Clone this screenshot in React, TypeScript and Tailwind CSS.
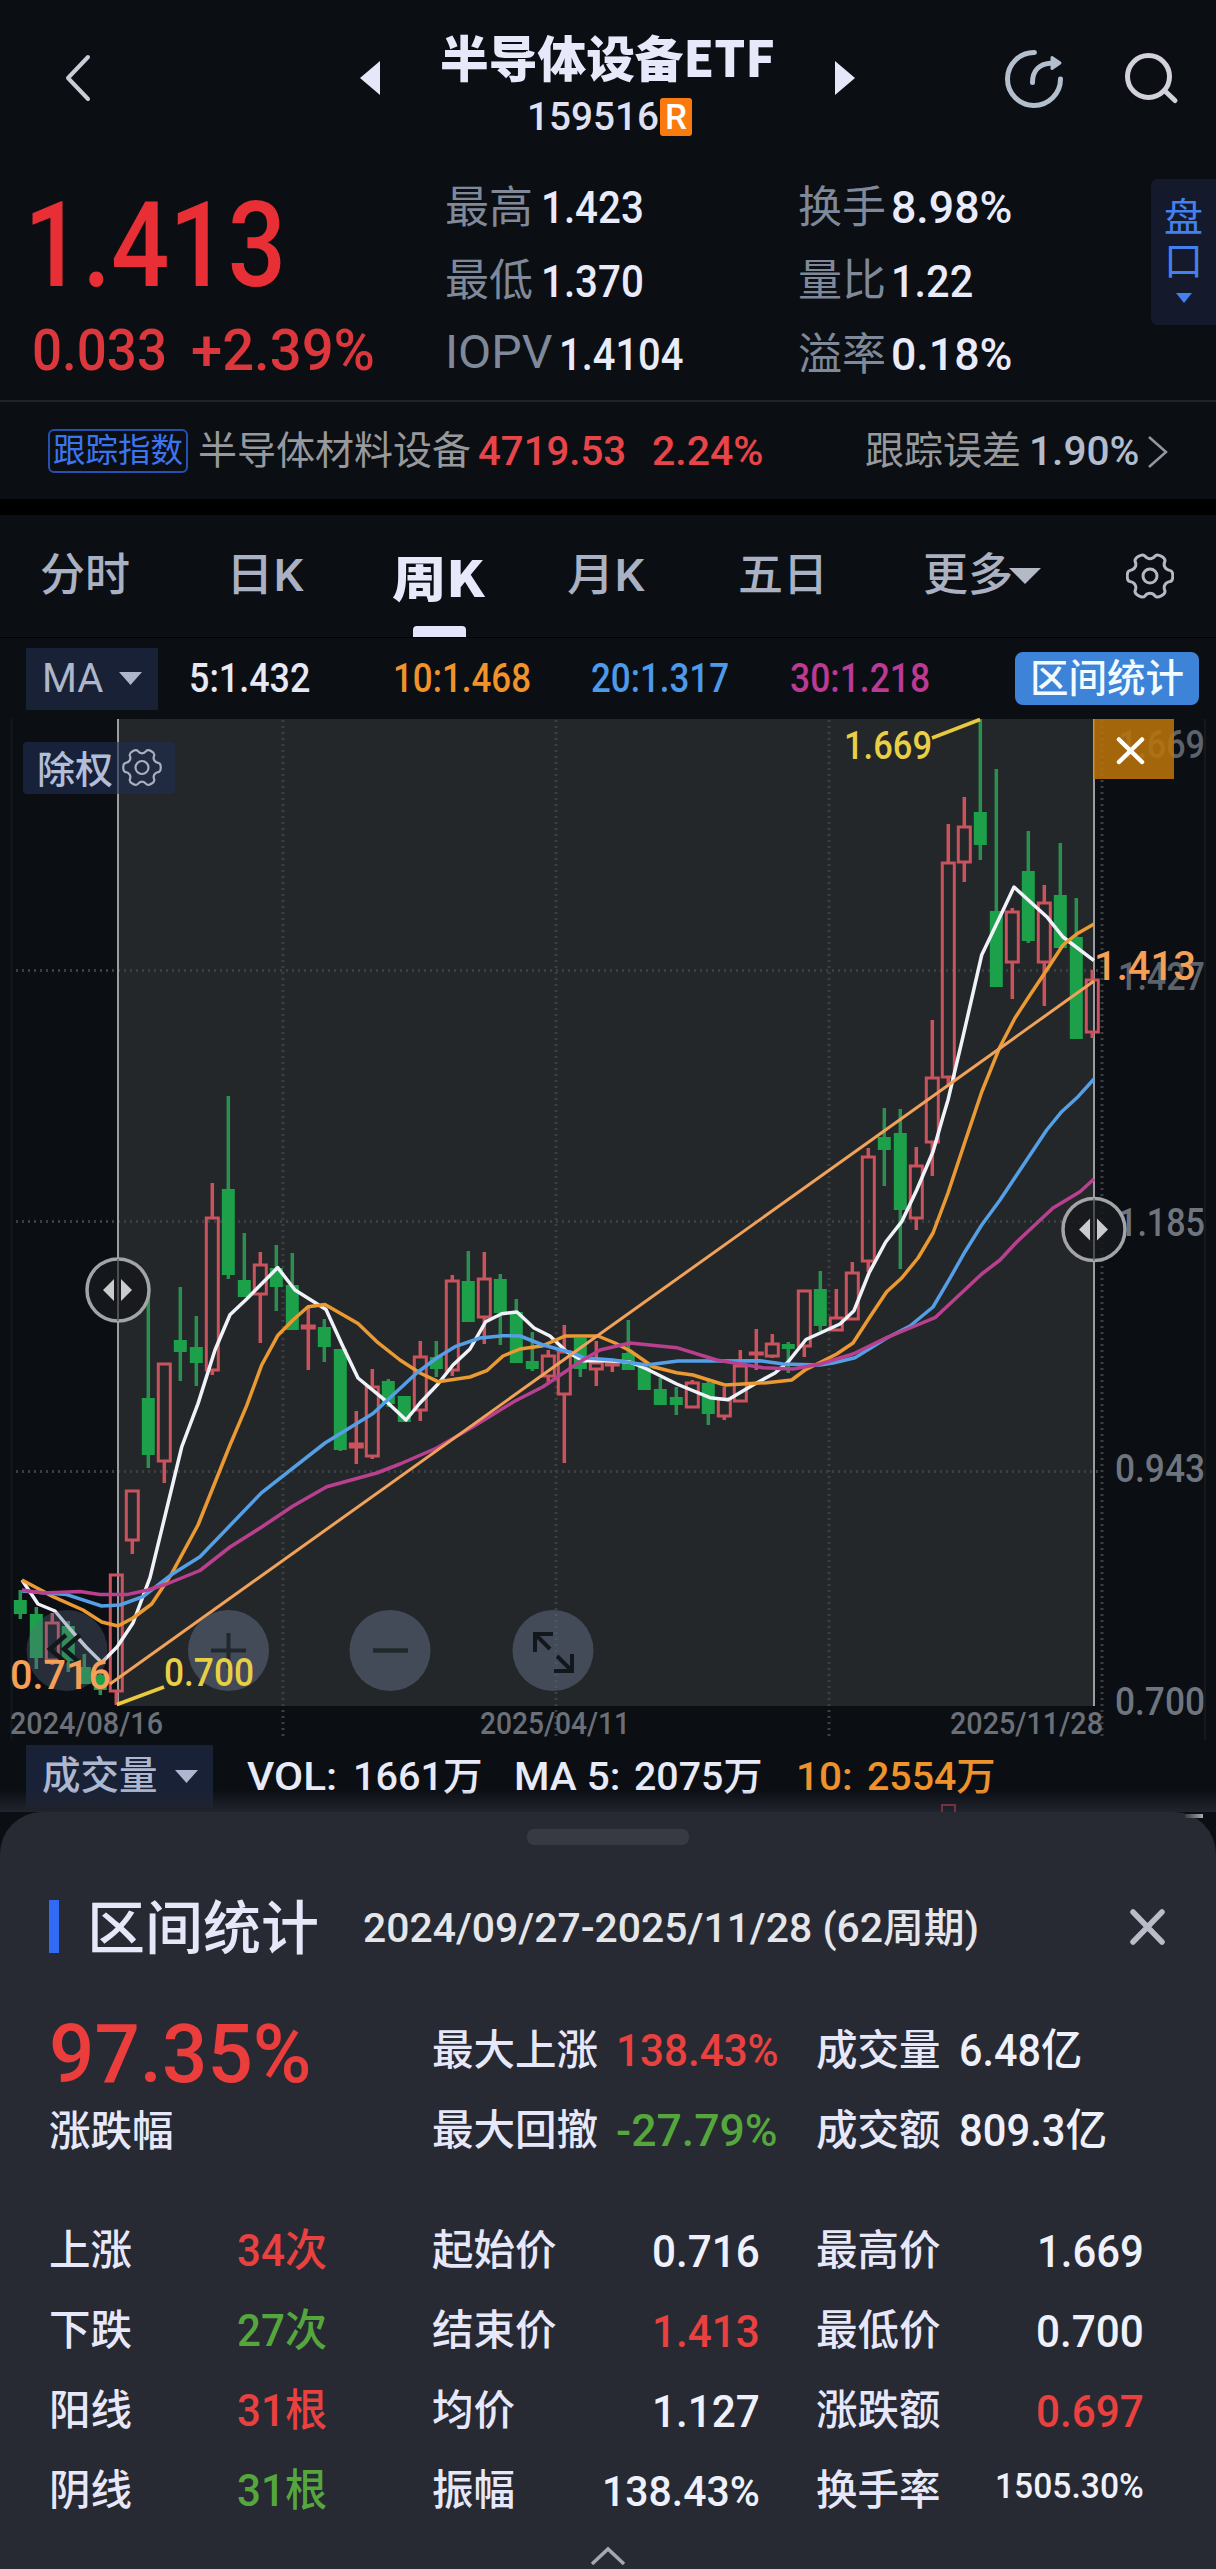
import { useLayoutEffect, useRef, useState, type ReactNode } from "react";

/** Text condensed or expanded horizontally so that it fills exactly `w` pixels. */
function Fit({ w, className = "", children }: { w: number; className?: string; children: ReactNode }) {
  const ref = useRef<HTMLSpanElement>(null);
  const [k, setK] = useState(1);
  useLayoutEffect(() => {
    if (ref.current && ref.current.offsetWidth) setK(w / ref.current.offsetWidth);
  }, [w]);
  return (
    <span className={"block shrink-0 leading-none " + className} style={{ width: w }}>
      <span ref={ref} className="inline-block origin-left whitespace-nowrap leading-none align-top" style={{ transform: `scaleX(${k})` }}>
        {children}
      </span>
    </span>
  );
}

function gearPath(cx: number, cy: number, r: number) {
  const pts: [number, number][] = [];
  const at = (deg: number, rad: number) => {
    const a = (deg * Math.PI) / 180;
    pts.push([cx + rad * Math.cos(a), cy + rad * Math.sin(a)]);
  };
  for (let t = 0; t < 6; t++) {
    at(t * 60 - 13, r * 1.04);
    at(t * 60 + 13, r * 1.04);
    at(t * 60 + 20, r * 0.78);
    at(t * 60 + 40, r * 0.78);
  }
  const mid = (a: [number, number], b: [number, number]) => `${((a[0] + b[0]) / 2).toFixed(2)} ${((a[1] + b[1]) / 2).toFixed(2)}`;
  let d = `M${mid(pts[pts.length - 1], pts[0])}`;
  pts.forEach((p, i) => {
    d += `Q${p[0].toFixed(2)} ${p[1].toFixed(2)} ${mid(p, pts[(i + 1) % pts.length])}`;
  });
  return d + "Z";
}

function Caret({ className }: { className: string }) {
  return (
    <svg viewBox="0 0 24 12" preserveAspectRatio="none" className={className} fill="currentColor">
      <path d="M0 0H24L12 12Z" />
    </svg>
  );
}

function Header() {
  return (
    <header className="grid h-[160px] grid-cols-[64px_296px_60px_375px_60px_149px_212px]">
      <span />
      <svg viewBox="0 0 30 50" className="mt-[53px] h-[50px] w-[30px]" fill="none" stroke="#c9cdd8" strokeWidth="4" strokeLinecap="round" strokeLinejoin="round">
        <path d="M24 4L4 25L24 46" />
      </svg>
      <svg viewBox="0 0 20 34" className="mt-[61px] h-[34px] w-[20px]" fill="#e6e8fa">
        <path d="M20 0V34L0 17Z" />
      </svg>
      <div className="flex flex-col pl-[20px]">
        <Fit w={335} className="mt-[31px] text-[49px] font-black text-[#e8e8fb] font-['Noto_Sans_CJK_SC',sans-serif]">半导体设备ETF</Fit>
        <div className="ml-[87px] mt-[18px] flex h-[38px] items-center">
          <Fit w={132} className="text-[39px] text-[#dfe1f2]">159516</Fit>
          <span className="ml-[1px] flex h-[38px] w-[32px] items-center justify-center rounded-[3px] bg-[#fb7a0d] text-[35px] leading-none text-white">R</span>
        </div>
      </div>
      <svg viewBox="0 0 20 34" className="ml-[40px] mt-[61px] h-[34px] w-[20px]" fill="#e6e8fa">
        <path d="M0 0V34L20 17Z" />
      </svg>
      <span />
      <svg viewBox="0 0 212 80" className="mt-[40px] h-[80px] w-[212px]" fill="none" strokeLinecap="round">
        <g stroke="#b3bfcc" strokeWidth="5">
          <path d="M30.500 12.500A26.500 26.500 0 1 0 56.500 39" />
          <path d="M28.500 42.500C28.500 30 36 24 46 23.200" />
          <path d="M48 17.500L56 23L48 28.500Z" fill="#b3bfcc" strokeWidth="3" strokeLinejoin="round" />
        </g>
        <g stroke="#d3d2dc" strokeWidth="5">
          <circle cx="144.500" cy="36.500" r="21" />
          <path d="M161 51L171 60.500" strokeWidth="5" />
        </g>
      </svg>
    </header>
  );
}

function Quote({ label, lw, value, vw }: { label: ReactNode; lw: string; value: string; vw: number }) {
  return (
    <div className="flex h-[73.500px] items-center">
      <span className={"shrink-0 text-[44px] font-normal leading-none text-[#7f8999] " + lw}>{label}</span>
      <Fit w={vw} className="text-[45px] text-[#e9ebfa]">{value}</Fit>
    </div>
  );
}

function Quotes() {
  return (
    <section className="grid h-[240px] grid-cols-[445px_353px_353px_65px]">
      <div className="pl-[24px] text-[#e82f36]">
        <Fit w={262} className="mt-[27px] text-[118px] font-medium">1.413</Fit>
        <div className="mt-[16px] flex text-[58px] text-[#dc373d]">
          <Fit w={135} className="ml-[8px]">0.033</Fit>
          <Fit w={184} className="ml-[24px]">+2.39%</Fit>
        </div>
      </div>
      <div className="pt-[11px]">
        <Quote label="最高" lw="w-[96px]" value="1.423" vw={103} />
        <Quote label="最低" lw="w-[96px]" value="1.370" vw={103} />
        <Quote label={<Fit w={107} className="-mt-[5px] text-[46px]">IOPV</Fit>} lw="w-[114px]" value="1.4104" vw={124} />
      </div>
      <div className="pt-[11px]">
        <Quote label="换手" lw="w-[93px]" value="8.98%" vw={121} />
        <Quote label="量比" lw="w-[93px]" value="1.22" vw={82} />
        <Quote label="溢率" lw="w-[93px]" value="0.18%" vw={121} />
      </div>
      <div className="mt-[19px] flex h-[146px] flex-col items-center rounded-l-[7px] bg-[#141a2b] text-[39px] leading-none text-[#4281ee] font-normal">
        <span className="mt-[20px]">盘</span>
        <span className="mt-[5px]">口</span>
        <Caret className="mt-[11px] h-[10px] w-[16px]" />
      </div>
    </section>
  );
}

function IndexRow() {
  return (
    <section className="grid h-[99px] grid-cols-[48px_150px_280px_174px_213px_164px_1fr] items-center border-t-2 border-[#1f242a] pt-[2px] text-[39px] font-normal leading-none text-[#97999d]">
      <span />
      <span className="-mt-[1px] flex h-[44px] w-[140px] items-center justify-center rounded-[6px] border-2 border-[#2450b4] text-[32.500px] leading-none text-[#3d74f0]">跟踪指数</span>
      <span>半导体材料设备</span>
      <Fit w={148} className="text-[41px] font-medium text-[#e8454a]">4719.53</Fit>
      <Fit w={112} className="text-[41px] font-medium text-[#e8454a]">2.24%</Fit>
      <span>跟踪误差</span>
      <div className="flex items-center">
        <Fit w={111} className="text-[41px] font-medium text-[#b1bccf]">1.90%</Fit>
        <svg viewBox="0 0 22 34" className="ml-[7px] h-[34px] w-[22px]" fill="none" stroke="#9297a0" strokeWidth="2.500">
          <path d="M2 2L19 17L2 32" />
        </svg>
      </div>
    </section>
  );
}

function Tabs() {
  return (
    <nav className="grid h-[123px] grid-cols-[40px_186px_166px_175px_171px_185px_203px_1fr] items-start border-b border-black pt-[38px] text-[45px] leading-[46px] text-[#a9b1c3]">
      <span />
      <span>分时</span>
      <Fit w={77} className="leading-[46px]">日K</Fit>
      <span className="relative font-black text-[#e8e8fb] font-['Noto_Sans_CJK_SC',sans-serif]">
        <Fit w={93} className="-mt-[2px] text-[49px]">周K</Fit>
        <span className="absolute left-[21px] top-[73px] h-[11px] w-[53px] rounded-t-[4px] bg-[#e4e4fa]" />
      </span>
      <Fit w={77}>月K</Fit>
      <span>五日</span>
      <span className="flex items-center">
        更多
        <Caret className="-ml-[4px] h-[16px] w-[32px] text-[#b4b9c6]" />
      </span>
      <svg viewBox="0 0 48 48" className="-mt-[1px] h-[48px] w-[48px]" fill="none" stroke="#b4b9c4" strokeWidth="3">
        <path d={gearPath(24, 24, 22.500)} />
        <circle cx="24" cy="24" r="7" />
      </svg>
    </nav>
  );
}

function MaRow() {
  return (
    <section className="grid h-[80px] grid-cols-[26px_163px_204px_198px_199px_225px_1fr] items-center pt-[1px] text-[40px]">
      <span />
      <span className="flex h-[62px] w-[132px] items-center bg-[#182136] pl-[16px] text-[#aeb7c9]">
        <Fit w={61} className="font-normal">MA</Fit>
        <Caret className="ml-[16px] h-[13px] w-[23px]" />
      </span>
      <Fit w={121} className="text-[#e6e8f4]">5:1.432</Fit>
      <Fit w={138} className="text-[#f0932b]">10:1.468</Fit>
      <Fit w={138} className="text-[#4d9ae8]">20:1.317</Fit>
      <Fit w={140} className="text-[#bb3a93]">30:1.218</Fit>
      <span className="flex h-[53px] w-[184px] items-center justify-center rounded-[8px] bg-[#3d84d8] pt-[2px] text-[38.500px] font-medium leading-none text-[#f2fbff]">区间统计</span>
    </section>
  );
}

// Weekly candles: [body top, body bottom, high, low, rising]
const candles: [number, number, number, number, 0 | 1][] = [
  [1600, 1614, 1590, 1619, 0], [1614, 1658, 1607, 1669, 0], [1622, 1661, 1613, 1665, 1], [1626, 1661, 1621, 1672, 0],
  [1667, 1684, 1654, 1684, 0], [1675, 1690, 1672, 1695, 0], [1574, 1692, 1574, 1705, 1], [1490, 1541, 1490, 1554, 1],
  [1398, 1455, 1296, 1468, 0], [1363, 1462, 1363, 1483, 1], [1340, 1352, 1287, 1381, 0], [1347, 1363, 1316, 1386, 0],
  [1217, 1371, 1183, 1375, 1], [1189, 1275, 1096, 1279, 0], [1280, 1297, 1233, 1297, 0], [1264, 1295, 1252, 1343, 1],
  [1268, 1287, 1245, 1311, 0], [1285, 1330, 1253, 1330, 0], [1325, 1329, 1308, 1370, 1], [1327, 1347, 1319, 1362, 0],
  [1349, 1450, 1349, 1451, 0], [1443, 1448, 1411, 1464, 1], [1386, 1457, 1369, 1459, 1], [1381, 1404, 1379, 1407, 0],
  [1396, 1422, 1396, 1422, 0], [1356, 1411, 1341, 1421, 1], [1357, 1369, 1341, 1377, 0], [1280, 1371, 1275, 1376, 1],
  [1281, 1322, 1251, 1322, 0], [1278, 1318, 1252, 1344, 1], [1279, 1313, 1274, 1345, 0], [1312, 1363, 1299, 1363, 0],
  [1361, 1369, 1332, 1371, 0], [1355, 1377, 1350, 1382, 1], [1351, 1395, 1325, 1463, 1], [1338, 1369, 1338, 1377, 0],
  [1362, 1370, 1341, 1386, 1], [1362, 1366, 1360, 1372, 1], [1353, 1370, 1320, 1370, 0], [1367, 1390, 1367, 1390, 0],
  [1389, 1405, 1378, 1405, 0], [1397, 1405, 1387, 1415, 0], [1382, 1408, 1380, 1408, 1], [1383, 1414, 1380, 1425, 0],
  [1398, 1417, 1387, 1420, 1], [1365, 1402, 1350, 1402, 1], [1352, 1353, 1329, 1370, 1], [1343, 1357, 1334, 1358, 1],
  [1344, 1349, 1342, 1373, 0], [1290, 1347, 1290, 1357, 1], [1289, 1326, 1271, 1331, 0], [1317, 1331, 1289, 1331, 1],
  [1272, 1320, 1262, 1320, 1], [1156, 1262, 1148, 1272, 1], [1137, 1150, 1108, 1186, 0], [1133, 1210, 1109, 1269, 0],
  [1165, 1219, 1147, 1230, 1], [1077, 1143, 1020, 1176, 1], [862, 1078, 824, 1086, 1], [826, 863, 797, 882, 1],
  [812, 845, 719, 860, 0], [911, 987, 769, 987, 0], [911, 963, 908, 999, 1], [871, 941, 831, 943, 0],
  [902, 963, 885, 1006, 1], [895, 948, 843, 948, 0], [937, 1039, 898, 1039, 0], [979, 1033, 970, 1038, 1],
];

const ma5 = "22,1580 38,1604 55,1611 70,1629 86,1647 101.7,1662.6 117,1647 133,1623 150,1577.6 165,1516 181.7,1447 198,1403.6 215,1350 230,1314.7 246.7,1299 277.7,1267.6 295,1290 326,1309.5 342.7,1346 358,1378 386.7,1401.7 406,1420 420,1403 438,1384 453,1365 470,1349 485.7,1321.7 501.7,1313.7 517,1312 534,1328 550,1336 566.7,1351.7 583,1360.7 606.7,1360.7 630,1362 646.7,1369 676.7,1384 710,1397.7 728,1399.7 753,1385 775,1373 788,1362 806,1339.5 840,1324 854,1310.7 869,1273 885.7,1242 901.7,1221.7 916.7,1190 933,1151.7 943,1116.7 948,1100 963,1036.7 981.7,955 1000,916.7 1014,887 1046.7,916.7 1063,937 1094,960.7";
const ma10 = "22,1580 53,1596.6 83,1610 101.7,1622 118,1626 133,1618 151.7,1604 171.7,1573.7 198,1525 213,1487.5 230,1445 246.7,1405.6 261.7,1365 277.7,1335.6 293,1320 308,1306.8 325,1304.4 358,1323.4 376.7,1341.6 400,1360 420,1373 438,1381.7 470,1377 486.7,1370.7 503,1356 520,1349 543,1345.7 565,1336 598,1336 615,1343 630,1350.7 653,1366.7 676.7,1372.7 693,1375 725,1385 766.7,1382.7 791.7,1380 805,1370 820,1362.5 836.7,1354 853,1343 870,1316.7 886.7,1291.7 901.7,1278 918,1258 933,1233 948,1193 965,1141.7 981.7,1092 1000,1046.7 1015,1018 1030,995 1046.7,970 1063,945 1076.7,934 1094,924";
const ma20 = "22,1591 66.7,1594.6 101.7,1606 120,1605 143,1596.6 171.7,1574.5 200,1556.7 261.7,1492.6 325,1443 373,1413.5 416.7,1373 436.7,1358 455,1346.7 480,1338 503,1335.7 520,1336 543,1345 573,1353 583,1357.7 613,1360 646.7,1365 678,1361 760,1360.7 783,1364 820,1365 833,1363 855,1357.7 886.7,1338 910,1326 933,1307 948,1281.7 965,1251.7 981.7,1225 1000,1200 1046.7,1130 1061.7,1111.7 1078,1096.7 1094,1079";
const ma30 = "22,1590 43,1593 80,1591.5 100,1594.6 126.7,1594.6 148,1590 166.7,1584 200,1570.5 230,1547 261.7,1527 293,1506 326.7,1486.7 376.7,1473 400,1464 436.7,1448 473,1426.7 515,1401 543,1386.7 580,1361.7 600,1350 630,1343 676.7,1347.7 716.7,1360 763,1367.7 793,1369 820,1364 853,1354 886.7,1337.7 910,1328 935,1317.7 981.7,1274 1000,1260 1016.7,1242 1053,1208 1080,1191.7 1094,1179";

function Label({ x, y, w, size, fill, children }: { x: number; y: number; w: number; size: number; fill: string; children: string }) {
  return (
    <text x={x} y={y} textLength={w} lengthAdjust="spacingAndGlyphs" fontSize={size} fill={fill}>
      {children}
    </text>
  );
}

function Handle({ x, y }: { x: number; y: number }) {
  return (
    <g>
      <circle cx={x} cy={y} r="31" fill="#16191c" fillOpacity="0.85" stroke="#a2a4a6" strokeWidth="3.500" />
      <path d={`M${x} ${y - 31}V${y + 31}`} stroke="#5a5c5e" strokeWidth="1.500" />
      <path d={`M${x - 15} ${y}L${x - 4} ${y - 11}V${y + 11}ZM${x + 14} ${y}L${x + 3} ${y - 11}V${y + 11}Z`} fill="#c9cbcd" />
    </g>
  );
}

function Chart() {
  return (
    <svg viewBox="0 718 1216 1022" className="block h-[1022px] w-[1216px] overflow-visible">
      <rect x="118" y="719" width="976" height="987" fill="#242729" />
      <path d="M11.500 719V1740M1205 719V1740" stroke="#15191f" strokeWidth="2" />
      <g stroke="#3b3f43" strokeWidth="3">
        <path d="M16 970.500H1100M16 1221.500H1100M16 1471.500H1100" strokeDasharray="2 4" />
        <path d="M283 720V1736M556 720V1736M829 720V1736M1102 720V1736" strokeDasharray="2 4" />
      </g>
      <path d="M118 719V1706M1094 719V1706" stroke="#9b9d9e" strokeWidth="2" />
      {candles.map(([top, bottom, high, low, up], i) => {
        const x = 20.300 + i * 16;
        return up ? (
          <g key={i} stroke="#cb535e" fill="none">
            <path d={`M${x} ${high}V${top}M${x} ${bottom}V${low}`} strokeWidth="3.500" />
            <rect x={x - 6} y={top + 1} width="12" height={Math.max(bottom - top - 2, 1)} strokeWidth="3" />
          </g>
        ) : (
          <g key={i}>
            <path d={`M${x} ${high}V${low}`} stroke="#2b8f50" strokeWidth="3.500" />
            <rect x={x - 6.500} y={top} width="13" height={bottom - top} fill="#1ca04a" />
          </g>
        );
      })}
      <g fill="none" strokeWidth="3.500" strokeLinejoin="round">
        <polyline points={ma5} stroke="#f0f2fa" />
        <polyline points={ma10} stroke="#eb9a33" />
        <polyline points={ma20} stroke="#559fe6" />
        <polyline points={ma30} stroke="#b9408f" />
        <path d="M110 1684L1094 981" stroke="#f0a25a" strokeWidth="3" />
      </g>
      <g stroke="#e9c93f" strokeWidth="3.500" fill="none">
        <path d="M932 738L980 719.500" />
        <path d="M117 1704.500L164 1687" />
      </g>

      <g fill="#5c6980">
        <circle cx="67" cy="1650.500" r="40.500" fillOpacity="0.35" />
        <circle cx="228.500" cy="1650.500" r="40.500" fillOpacity="0.55" />
        <circle cx="390" cy="1650.500" r="40.500" fillOpacity="0.55" />
        <circle cx="553" cy="1650.500" r="40.500" fillOpacity="0.55" />
      </g>
      <g fill="none" stroke="#12171b" strokeWidth="4">
        <path d="M66 1635L50 1649L66 1663M80 1635L64 1649L80 1663" strokeWidth="4.500" />
        <path d="M211 1650.500H246M228.500 1633V1668" stroke="#20282c" />
        <path d="M373 1650.500H408" stroke="#20282c" strokeWidth="4.500" />
        <path d="M535 1652V1634H553M535 1634L550 1649M572 1654V1671H554M572 1671L557 1656" />
      </g>

      <g fontFamily="Roboto, sans-serif" fontWeight="500">
        <Label x={1118} y={758} w={87} size={38} fill="#5d636c">1.669</Label>
        <Label x={1118} y={990} w={87} size={38} fill="#5d636c">1.427</Label>
        <Label x={1118} y={1235.500} w={87} size={38} fill="#6f757e">1.185</Label>
        <Label x={1115} y={1481.500} w={90} size={38} fill="#6f757e">0.943</Label>
        <Label x={1115} y={1715} w={90} size={38} fill="#6f757e">0.700</Label>
        <Label x={844} y={759} w={88} size={38} fill="#e9cf45">1.669</Label>
        <Label x={164} y={1686} w={90} size={38} fill="#e9cf45">0.700</Label>
        <Label x={10} y={1689} w={101} size={40} fill="#f5a056">0.716</Label>
        <Label x={1094} y={980} w={102} size={40} fill="#f5a056">1.413</Label>
        <Label x={10} y={1734} w={153} size={32} fill="#6b7078">2024/08/16</Label>
        <Label x={480} y={1734} w={150} size={32} fill="#6b7078">2025/04/11</Label>
        <Label x={950} y={1734} w={153} size={32} fill="#6b7078">2025/11/28</Label>
      </g>

      <rect x="23" y="742" width="152" height="52" rx="4" fill="#1f2f52" fillOpacity="0.62" />
      <text x="37" y="783" fontSize="38" fontWeight="500" fill="#b3bdd6" fontFamily="'Noto Sans CJK SC', sans-serif">除权</text>
      <g fill="none" stroke="#a9afbc" strokeWidth="2.200">
        <path d={gearPath(142, 767.500, 18.500)} />
        <circle cx="142" cy="767.500" r="6.500" />
      </g>

      <rect x="1094" y="719" width="80" height="60" fill="#b8730a" fillOpacity="0.88" />
      <path d="M1119 739.500L1142 762M1142 739.500L1119 762" stroke="#fff" strokeWidth="4.500" strokeLinecap="round" />

      <Handle x={118} y={1290} />
      <Handle x={1094} y={1229.500} />
    </svg>
  );
}

function VolumeRow() {
  return (
    <section className="relative grid h-[72px] grid-cols-[26px_221px_106px_161px_120px_162px_71px_1fr] items-start pt-[5px] text-[39px] text-[#e8eaf8]">
      <span />
      <span className="flex h-[63px] w-[187px] items-center bg-[#182136] pl-[16px] text-[38.500px] leading-none text-[#aeb7d0]">
        成交量
        <Caret className="ml-[17px] h-[13px] w-[23px]" />
      </span>
      <Fit w={90} className="pt-[13px]">VOL:</Fit>
      <Fit w={130} className="pt-[13px]">1661万</Fit>
      <Fit w={106} className="pt-[13px]">MA 5:</Fit>
      <Fit w={129} className="pt-[13px]">2075万</Fit>
      <Fit w={57} className="pt-[13px] text-[#ee922c]">10:</Fit>
      <Fit w={129} className="pt-[13px] text-[#ee922c]">2554万</Fit>
      <div className="absolute inset-x-0 bottom-0 h-[22px] bg-gradient-to-b from-[#1b1d26]/0 to-[#22242d]" />
      <div className="absolute bottom-0 left-[941px] h-[8px] w-[15px] border-2 border-b-0 border-[#74323b]" />
      <div className="absolute -bottom-[6px] left-[1185px] h-[4px] w-[18px] bg-gradient-to-r from-[#3a3c44] to-[#a8aab0]" />
    </section>
  );
}

const title = "text-[#e6e8fa]";
const red = "text-[#e8413f]";
const green = "text-[#55a63c]";

function Stat({ label, value, w, tone = "text-[#eef0fa]" }: { label: string; value: string; w: number; tone?: string }) {
  return (
    <div className="flex h-[80px] items-center">
      <span className={"mr-[18px] text-[41.500px] leading-none " + title}>{label}</span>
      <Fit w={w} className={"text-[44px] " + tone}>{value}</Fit>
    </div>
  );
}

type Cell = [label: string, value: string, width: number, tone?: string, size?: string];
const table: Cell[][] = [
  [["上涨", "34次", 90, red], ["起始价", "0.716", 108], ["最高价", "1.669", 107]],
  [["下跌", "27次", 90, green], ["结束价", "1.413", 108, red], ["最低价", "0.700", 108]],
  [["阳线", "31根", 90, red], ["均价", "1.127", 108], ["涨跌额", "0.697", 108, red]],
  [["阴线", "31根", 90, green], ["振幅", "138.43%", 158, undefined, "text-[43px]"], ["换手率", "1505.30%", 149, undefined, "text-[35px] pb-[9px]"]],
];

function Sheet() {
  return (
    <section className="h-[757px] rounded-t-[42px] bg-[#272933]">
      <div className="mx-auto flex h-[66px] w-[162px] items-start pt-[17px]">
        <div className="h-[16px] w-full rounded-[7px] bg-[#373943]" />
      </div>
      <div className="grid h-[100px] grid-cols-[49px_38px_276px_766px_1fr] items-center">
        <span />
        <span className="-mt-[4px] h-[53px] w-[10px] bg-[#2f6bf5]" />
        <span className={"whitespace-nowrap pt-[1px] text-[58px] font-medium leading-none " + title}>区间统计</span>
        <Fit w={616} className="pt-[2px] text-[40px] text-[#e4e6ea]">2024/09/27-2025/11/28 (62周期)</Fit>
        <svg viewBox="0 0 38 38" className="-mt-[3px] h-[38px] w-[38px]" stroke="#babcc7" strokeWidth="5.500" strokeLinecap="round">
          <path d="M4 4L33 34M33 4L4 34" />
        </svg>
      </div>
      <div className="mt-[33px] grid h-[160px] grid-cols-[49px_383px_384px_1fr]">
        <span />
        <div>
          <Fit w={263} className="mt-[2px] text-[82px] font-medium text-[#ec3d3d]">97.35%</Fit>
          <div className={"mt-[16px] text-[41.500px] leading-none " + title}>涨跌幅</div>
        </div>
        <div>
          <Stat label="最大上涨" value="138.43%" w={163} tone={red} />
          <Stat label="最大回撤" value="-27.79%" w={162} tone={green} />
        </div>
        <div>
          <Stat label="成交量" value="6.48亿" w={123} />
          <Stat label="成交额" value="809.3亿" w={148} />
        </div>
      </div>
      <div className="mt-[40px]">
        {table.map((row, i) => (
          <div key={i} className="grid h-[80px] grid-cols-[49px_188px_195px_384px_1fr] items-center">
            <span />
            <span className={"text-[41.500px] leading-none " + title}>{row[0][0]}</span>
            <Fit w={row[0][2]} className={"text-[44px] " + row[0][3]}>{row[0][1]}</Fit>
            {row.slice(1).map(([label, value, w, tone, size]) => (
              <div key={label} className="flex w-[328px] items-center justify-between">
                <span className={"text-[41.500px] leading-none " + title}>{label}</span>
                <Fit w={w} className={(size ?? "text-[45px]") + " " + (tone ?? "text-[#eef0fa]")}>{value}</Fit>
              </div>
            ))}
          </div>
        ))}
      </div>
      <svg viewBox="0 0 36 20" className="mx-auto mt-[15px] h-[20px] w-[36px]" fill="none" stroke="#a6a8b0" strokeWidth="3.500">
        <path d="M2 18L18 3L34 18" />
      </svg>
    </section>
  );
}

export default function App() {
  return (
    <main className="h-[2569px] w-[1216px] overflow-hidden bg-[#0b0f14] font-['Roboto','Noto_Sans_CJK_SC',sans-serif] font-medium">
      <Header />
      <Quotes />
      <IndexRow />
      <div className="h-[16px] bg-black" />
      <Tabs />
      <MaRow />
      <Chart />
      <VolumeRow />
      <Sheet />
    </main>
  );
}
